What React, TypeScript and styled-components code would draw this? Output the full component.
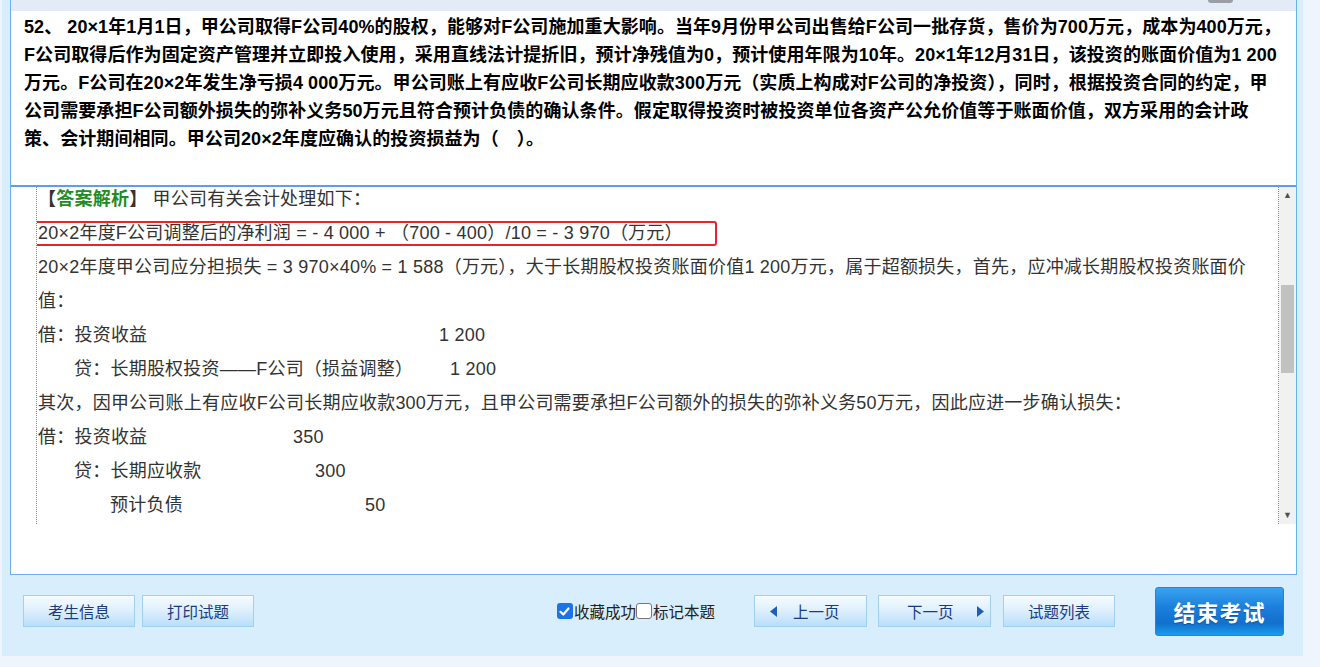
import styled, { createGlobalStyle } from "styled-components"

const GlobalStyle = createGlobalStyle`
  html, body {
    margin: 0;
    padding: 0;
    background: #eef5fd;
    font-family: "Liberation Sans", "Noto Sans CJK SC", sans-serif;
  }
`

const questionLines = [
  "52、 20×1年1月1日，甲公司取得F公司40%的股权，能够对F公司施加重大影响。当年9月份甲公司出售给F公司一批存货，售价为700万元，成本为400万元，",
  "F公司取得后作为固定资产管理并立即投入使用，采用直线法计提折旧，预计净残值为0，预计使用年限为10年。20×1年12月31日，该投资的账面价值为1 200",
  "万元。F公司在20×2年发生净亏损4 000万元。甲公司账上有应收F公司长期应收款300万元（实质上构成对F公司的净投资），同时，根据投资合同的约定，甲",
  "公司需要承担F公司额外损失的弥补义务50万元且符合预计负债的确认条件。假定取得投资时被投资单位各资产公允价值等于账面价值，双方采用的会计政",
  "策、会计期间相同。甲公司20×2年度应确认的投资损益为（　）。",
]

const entries = [
  { indent: 0, label: "借：投资收益", width: 401, amount: "1 200" },
  { indent: 36, label: "贷：长期股权投资——F公司（损益调整）", width: 376, amount: "1 200" },
]

const entries2 = [
  { indent: 0, label: "借：投资收益", width: 255, amount: "350" },
  { indent: 36, label: "贷：长期应收款", width: 241, amount: "300" },
  { indent: 72, label: "预计负债", width: 255, amount: "50" },
]

function Check({ on }: { on?: boolean }) {
  return (
    <CheckBox $on={on}>
      {on && (
        <svg width="11" height="11" viewBox="0 0 11 11">
          <path d="M1.5 5.8 L4.3 8.5 L9.5 2.5" stroke="#fff" strokeWidth="2.2" fill="none" strokeLinecap="round" strokeLinejoin="round" />
        </svg>
      )}
    </CheckBox>
  )
}

function Arrow({ dir }: { dir: "left" | "right" }) {
  return (
    <svg width="7" height="11" viewBox="0 0 7 11">
      {dir === "left" ? <polygon points="7,0 7,11 0,5.5" fill="#1d5fb5" /> : <polygon points="0,0 0,11 7,5.5" fill="#1d5fb5" />}
    </svg>
  )
}

export default function App() {
  return (
    <>
      <GlobalStyle />
      <Panel>
        <PaperBox>
          <TopBand>
            <TopTab />
          </TopBand>

          {/* question */}
          <Question>
            {questionLines.map((l, i) => (
              <div key={i}>{l}</div>
            ))}
          </Question>

          {/* answer analysis with its scroll bar */}
          <AnswerArea>
            <AnswerScroll>
              <AnswerInner>
                <Line>
                  <Bracket>【</Bracket>
                  <Green>答案解析</Green>
                  <Bracket>】</Bracket> 甲公司有关会计处理如下：
                </Line>
                <Line>
                  <Marked>20×2年度F公司调整后的净利润 = - 4 000 + （700 - 400）/10 = - 3 970（万元）</Marked>
                </Line>
                <Line>20×2年度甲公司应分担损失 = 3 970×40% = 1 588（万元），大于长期股权投资账面价值1 200万元，属于超额损失，首先，应冲减长期股权投资账面价</Line>
                <Line>值：</Line>
                {entries.map((e, i) => (
                  <Line key={i} $indent={e.indent}>
                    <Label $w={e.width}>{e.label}</Label>
                    {e.amount}
                  </Line>
                ))}
                <Line>其次，因甲公司账上有应收F公司长期应收款300万元，且甲公司需要承担F公司额外的损失的弥补义务50万元，因此应进一步确认损失：</Line>
                {entries2.map((e, i) => (
                  <Line key={i} $indent={e.indent}>
                    <Label $w={e.width}>{e.label}</Label>
                    {e.amount}
                  </Line>
                ))}
              </AnswerInner>
            </AnswerScroll>
            <ScrollBar>
              <ScrollArrow>▲</ScrollArrow>
              <Thumb />
              <ScrollArrow $bottom>▼</ScrollArrow>
            </ScrollBar>
          </AnswerArea>
        </PaperBox>

        <Toolbar>
          <Group $gap={7}>
            <ToolButton>考生信息</ToolButton>
            <ToolButton>打印试题</ToolButton>
          </Group>
          <Group>
            <Checks>
              <Check on />
              <CheckText>收藏成功</CheckText>
              <Check />
              <CheckText>标记本题</CheckText>
            </Checks>
            <NavButton $pl={15} $gap={16} style={{ marginLeft: 39 }}>
              <Arrow dir="left" />
              上一页
            </NavButton>
            <NavButton $pl={28} $gap={23} style={{ marginLeft: 11 }}>
              下一页
              <Arrow dir="right" />
            </NavButton>
            <ToolButton style={{ marginLeft: 12 }}>试题列表</ToolButton>
            <EndButton>结束考试</EndButton>
          </Group>
        </Toolbar>
      </Panel>
    </>
  )
}

const Panel = styled.div`
margin-left: 2px;
width: 1301px;
height: 656px;
background: #d9eefc;
display: flex;
flex-direction: column;
`

const PaperBox = styled.div`
margin-left: 8px;
width: 1285px;
height: 574px;
background: #fff;
border: 1px solid #66b3ee;
border-top: none;
display: flex;
flex-direction: column;
`

const TopBand = styled.div`
height: 11px;
background: #e3ebf6;
display: flex;
justify-content: flex-end;
padding-right: 63px;
`

const TopTab = styled.div`
width: 25px;
height: 3px;
background: #9a9fa6;
border-radius: 0 0 3px 3px;
`

const Question = styled.div`
height: 172px;
padding: 2px 0 0 13px;
font-weight: bold;
font-size: 18px;
letter-spacing: 0.08px;
line-height: 28px;
color: #000;
white-space: nowrap;
overflow: hidden;
border-bottom: 2px solid #5ba1e2;
`

const AnswerArea = styled.div`
display: flex;
height: 337px;
margin-left: 25px;
`

const AnswerScroll = styled.div`
flex: 1;
overflow: hidden;
border-left: 1px dotted #ff6a00;
border-right: 1px dotted #ff6a00;
padding-left: 1px;
`

const AnswerInner = styled.div`
margin-top: -5px;
font-size: 18px;
letter-spacing: 0.22px;
line-height: 34px;
color: #333;
white-space: nowrap;
`

const Line = styled.div<{ $indent?: number }>`
height: 34px;
padding-left: ${(p) => p.$indent || 0}px;
`

const Bracket = styled.span`
font-weight: bold;
color: #333;
`

const Green = styled.span`
font-weight: bold;
color: #228b22;
`

const Marked = styled.span`
display: inline-block;
box-sizing: border-box;
width: 684px;
margin-left: -5px;
padding-left: 3px;
line-height: 21px;
border: 2px solid #e8232b;
border-radius: 3px;
`

const Label = styled.span<{ $w: number }>`
display: inline-block;
width: ${(p) => p.$w}px;
`

const ScrollBar = styled.div`
width: 17px;
background: #f1f1f1;
display: flex;
flex-direction: column;
align-items: center;
`

const ScrollArrow = styled.div<{ $bottom?: boolean }>`
height: 17px;
font-size: 9px;
line-height: 17px;
color: #505050;
margin-top: ${(p) => (p.$bottom ? "auto" : "0")};
`

const Thumb = styled.div`
width: 13px;
height: 88px;
background: #c1c1c1;
margin-top: 81px;
`

const Toolbar = styled.div`
flex: 1;
display: flex;
align-items: center;
justify-content: space-between;
padding: 0 19px 9px 21px;
`

const Group = styled.div<{ $gap?: number }>`
display: flex;
align-items: center;
gap: ${(p) => p.$gap || 0}px;
`

const ToolButton = styled.div`
box-sizing: border-box;
width: 112px;
height: 32px;
border: 1px solid #9fd0f5;
background: linear-gradient(#f5fbff 0%, #e3f2fd 40%, #b9defa 100%);
color: #1c3a80;
font-family: "Noto Sans CJK SC", sans-serif;
font-size: 15.5px;
display: flex;
align-items: center;
justify-content: center;
`

const NavButton = styled(ToolButton)<{ $pl: number; $gap: number }>`
width: 113px;
justify-content: flex-start;
padding-left: ${(p) => p.$pl}px;
gap: ${(p) => p.$gap}px;
`

const Checks = styled.div`
display: flex;
align-items: center;
font-family: "Noto Sans CJK SC", sans-serif;
font-size: 15.5px;
color: #222;
`

const CheckBox = styled.span<{ $on?: boolean }>`
box-sizing: border-box;
width: 16px;
height: 16px;
border-radius: 3px;
display: flex;
align-items: center;
justify-content: center;
background: ${(p) => (p.$on ? "#1a73e8" : "#fff")};
border: ${(p) => (p.$on ? "none" : "1.5px solid #777")};
`

const CheckText = styled.span`
margin-left: 1px;
`

const EndButton = styled.div`
box-sizing: border-box;
margin-left: 40px;
width: 129px;
height: 49px;
border: 1px solid #1a86e6;
border-radius: 3px;
background: linear-gradient(#3aa2f0 0%, #1b80dc 40%, #1170cc 75%, #1a9cec 100%);
color: #fff;
font-family: "Noto Sans CJK SC", sans-serif;
font-weight: bold;
font-size: 22px;
letter-spacing: 1px;
display: flex;
align-items: center;
justify-content: center;
text-shadow: 0 1px 1px rgba(0, 40, 100, 0.4);
`
